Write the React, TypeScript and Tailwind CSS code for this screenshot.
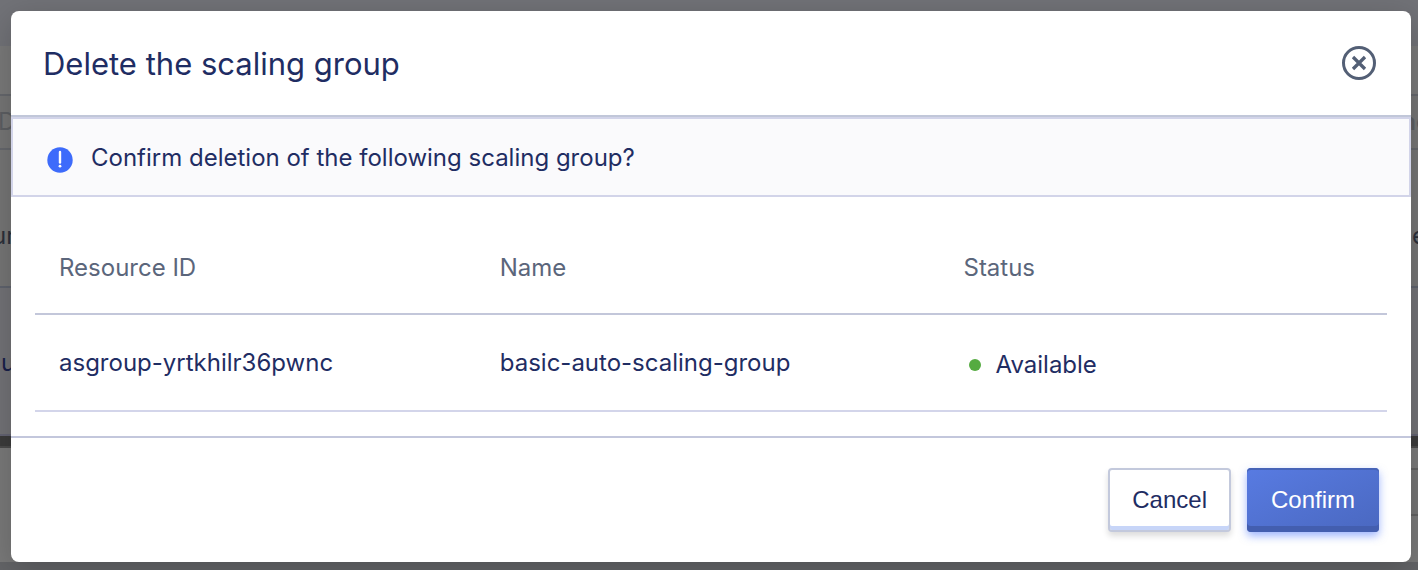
import React from "react";

const rows = [{ id: "asgroup-yrtkhilr36pwnc", name: "basic-auto-scaling-group", status: "Available" }];

function Backdrop() {
  return (
    <div aria-hidden="true" className="flex min-h-screen flex-col overflow-hidden bg-[#757575] text-2xl">
      <div className="h-[46px] bg-[#717277]" />
      <div className="h-12 bg-[#797979]" />
      <div className="flex h-14 items-center justify-between border-y-2 border-[#65676c] text-[#5c5e62]">
        <span className="-ml-0.5">D</span>
        <span className="-mr-3 font-semibold">nc</span>
      </div>
      <div className="flex h-[138px] items-center justify-between border-b-2 border-[#5f636d] pt-9 text-[#2b2f3a]">
        <span className="-ml-2">ur</span>
        <span className="-mr-2">e</span>
      </div>
      <div className="flex h-[148px] items-center border-b-2 border-[#636372] bg-[#727276] pt-1 pl-px text-[#18204a]">
        <span>u</span>
      </div>
      <div className="h-3 border-b-2 border-[#4b4b4b] bg-[#3b3b3b]" />
      <div className="flex h-[114px] flex-col items-end bg-[#797979] pt-5">
        <div className="h-12 w-4 border-y-2 border-[#626262] bg-[#757575]" />
      </div>
      <div className="flex-1 bg-[#636467]" />
    </div>
  );
}

function CloseIcon() {
  return (
    <svg width="36" height="36" viewBox="0 0 36 36" fill="none" stroke="#535f75" strokeWidth="3">
      <circle cx="18" cy="18" r="15.5" />
      <path d="M12 12 24 24M24 12 12 24" strokeWidth="3.3" />
    </svg>
  );
}

function InfoIcon() {
  return (
    <svg width="26" height="26" viewBox="0 0 26 26" className="mt-1 shrink-0">
      <circle cx="13" cy="13" r="12.7" fill="#3d6bfb" />
      <path d="M13 5v10.5" stroke="#fff" strokeWidth="2.4" strokeLinecap="round" />
      <circle cx="13" cy="19.2" r="1.4" fill="#fff" />
    </svg>
  );
}

export default function App() {
  return (
    <div className="relative min-h-screen overflow-hidden font-['Inter',sans-serif] text-[#1f2d63]">
      <Backdrop />
      <div className="absolute inset-0 pt-[11px] pr-[7px] pb-2 pl-[11px]">
        <section
          role="dialog"
          aria-modal="true"
          aria-labelledby="dialog-title"
          className="flex min-h-full flex-col overflow-hidden rounded-lg bg-white shadow-[0_8px_32px_rgba(0,0,0,0.2)]"
        >
          <header className="flex h-[106px] items-center justify-between border-b-2 border-[#c1c7d9] pr-[34px] pl-8">
            <h2 id="dialog-title" className="pt-0.5 text-[31px] leading-10">Delete the scaling group</h2>
            <button type="button" aria-label="Close"><CloseIcon /></button>
          </header>
          <div className="flex h-20 items-center gap-[18px] border-2 border-[#d2d4e9] bg-[#fafafc] px-[34px] pt-0.5 text-2xl">
            <InfoIcon />
            <p>Confirm deletion of the following scaling group?</p>
          </div>
          <div className="flex-1 px-6 pt-[25px] pb-6">
            <table className="w-full table-fixed text-left text-2xl">
              <colgroup>
                <col className="w-[32.6%]" />
                <col className="w-[34.3%]" />
                <col />
              </colgroup>
              <thead>
                <tr className="h-[92px] border-b-2 border-[#c3c7da] text-[#5b667b]">
                  <th className="px-6 font-normal">Resource ID</th>
                  <th className="px-6 font-normal">Name</th>
                  <th className="px-6 font-normal">Status</th>
                </tr>
              </thead>
              <tbody>
                {rows.map((row) => (
                  <tr key={row.id} className="h-[97px] border-b-2 border-[#d3d5ea]">
                    <td className="px-6">{row.id}</td>
                    <td className="px-6">{row.name}</td>
                    <td className="px-6">
                      <span className="flex items-center gap-[14px] pt-1 pl-1.5">
                        <span className="size-3 rounded-full bg-[#55ab41]" />
                        {row.status}
                      </span>
                    </td>
                  </tr>
                ))}
              </tbody>
            </table>
          </div>
          <footer className="flex h-[126px] justify-end gap-4 border-t-2 border-[#c3c7dc] px-8 pt-[30px] font-['Liberation_Sans',Arial,sans-serif] text-2xl">
            <button
              type="button"
              className="h-16 rounded-[4px] border-2 border-[#c3c9dc] bg-white px-[22px] shadow-[inset_0_-4px_0_#c7d5f8,0_4px_6px_rgba(0,0,0,0.14)]"
            >
              Cancel
            </button>
            <button
              type="button"
              className="h-16 rounded-[4px] bg-linear-to-br from-[#587be2] to-[#4a68c0] px-6 text-white shadow-[inset_0_2px_0_#4764b7,inset_0_-6px_0_#435eaf,0_4px_8px_rgba(61,107,251,0.5)]"
            >
              Confirm
            </button>
          </footer>
        </section>
      </div>
    </div>
  );
}
